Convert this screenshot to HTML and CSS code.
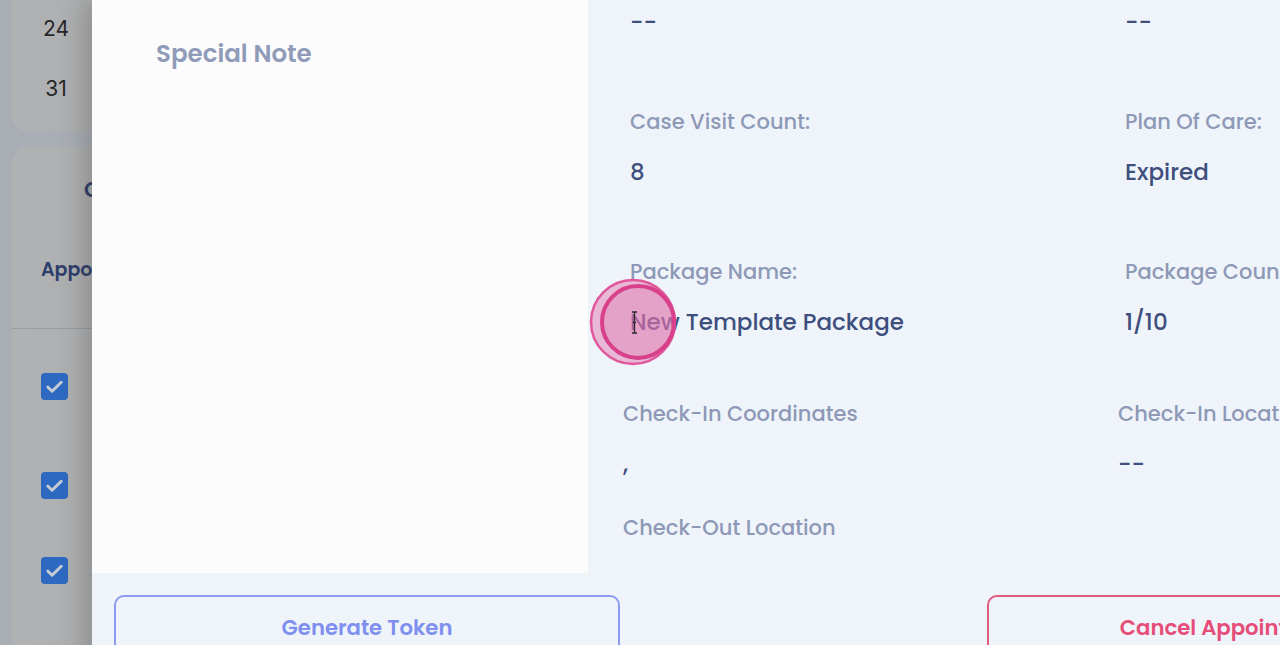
FILE: index.html
```html
<!DOCTYPE html>
<html>
<head>
<meta charset="utf-8">
<link rel="stylesheet" href="styles.css">
</head>
<body>
<div class="page">
  <div class="card card-top">
    <div class="daynum">24</div>
    <div class="daynum">31</div>
  </div>
  <div class="card card-list">
    <div class="list-title">Calendar</div>
    <div class="list-head">Appointments</div>
    <div class="list-rule"></div>
    <div class="checks">
      <span class="cb cb1"><svg viewBox="0 0 28 28" width="27" height="27"><path d="M7 14.5l4.5 4.5L21 9.5" fill="none" stroke="#c7ccd4" stroke-width="3" stroke-linecap="round" stroke-linejoin="round"/></svg></span>
      <span class="cb cb2"><svg viewBox="0 0 28 28" width="27" height="27"><path d="M7 14.5l4.5 4.5L21 9.5" fill="none" stroke="#c7ccd4" stroke-width="3" stroke-linecap="round" stroke-linejoin="round"/></svg></span>
      <span class="cb cb3"><svg viewBox="0 0 28 28" width="27" height="27"><path d="M7 14.5l4.5 4.5L21 9.5" fill="none" stroke="#c7ccd4" stroke-width="3" stroke-linecap="round" stroke-linejoin="round"/></svg></span>
    </div>
  </div>
</div>

<div class="modal">
  <div class="modal-body">
    <div class="note-panel">
      <div class="note-title">Special Note</div>
    </div>
    <div class="details">
      <div class="grid">
        <div class="field"><div class="label">Case Status:</div><div class="value">--</div></div>
        <div class="field"><div class="label">Authorization:</div><div class="value">--</div></div>
        <div class="field"><div class="label">Case Visit Count:</div><div class="value">8</div></div>
        <div class="field"><div class="label">Plan Of Care:</div><div class="value">Expired</div></div>
        <div class="field"><div class="label">Package Name:</div><div class="value">New Template Package</div></div>
        <div class="field"><div class="label">Package Count:</div><div class="value">1/10</div></div>
      </div>
      <div class="grid grid-lower">
        <div class="field"><div class="label">Check-In Coordinates</div><div class="value">,</div></div>
        <div class="field"><div class="label">Check-In Location</div><div class="value">--</div></div>
        <div class="field"><div class="label">Check-Out Location</div><div class="value"></div></div>
      </div>
    </div>
  </div>
  <div class="modal-footer">
    <button class="btn btn-token">Generate Token</button>
    <button class="btn btn-cancel">Cancel Appointment</button>
  </div>
</div>

<div class="click-mark">
  <svg width="100" height="100" viewBox="0 0 100 100">
    <circle cx="44" cy="45" r="42" fill="rgba(226,110,170,0.45)" stroke="#e0579c" stroke-width="2.5"/>
    <circle cx="49" cy="45" r="36" fill="rgba(220,120,175,0.35)" stroke="#d9408c" stroke-width="4"/>
    <path d="M43 35h3M48 35h-3M45.5 35v21M43 56h5M44 45.5h3" fill="none" stroke="#2a2a2a" stroke-width="1.3"/>
  </svg>
</div>
</body>
</html>
```

FILE: styles.css
```css
* { box-sizing: border-box; }
html, body {
  margin: 0;
  padding: 0;
  width: 1280px;
  height: 645px;
  overflow: hidden;
}
body {
  background: #a9aeb4;
  font-family: "Poppins", "Open Sans", "Liberation Sans", sans-serif;
}

/* background page, dimmed by backdrop */
.page {
  padding-left: 12px;
  display: flex;
  flex-direction: column;
  gap: 16px;
}
.card {
  width: 140px;
  background: linear-gradient(90deg, #b1b2b4 0%, #adaeaf 60%, #a4a4a5 100%);
}
.card-top {
  height: 131px;
  border-radius: 0 0 16px 16px;
  padding-top: 13px;
}
.daynum {
  width: 84px;
  text-align: center;
  font-family: "Inter", "Roboto", sans-serif;
  font-size: 21px;
  color: #262626;
  line-height: 32px;
  margin-bottom: 28px;
  padding-left: 4px;
}
.card-list {
  height: 520px;
  border-radius: 16px 16px 0 0;
}
.list-title {
  padding: 30px 0 0 72px;
  font-size: 21px;
  font-weight: 600;
  color: #2b3c66;
  line-height: 26px;
  white-space: nowrap;
}
.list-head {
  padding: 55px 0 0 29px;
  font-size: 19px;
  font-weight: 600;
  color: #2d3e6a;
  line-height: 24px;
  white-space: nowrap;
}
.list-rule {
  margin-top: 46px;
  height: 1px;
  background: #989ca1;
}
.checks {
  display: flex;
  flex-direction: column;
  padding-left: 29px;
}
.cb {
  width: 27px;
  height: 27px;
  border-radius: 4px;
  background: #2e69c1;
  display: block;
}
.cb svg { display: block; }
.cb1 { margin-top: 44px; }
.cb2 { margin-top: 72px; }
.cb3 { margin-top: 58px; }

/* modal */
.modal {
  position: absolute;
  top: 0;
  left: 92px;
  width: 1420px;
  height: 700px;
  background: #eff4fa;
  box-shadow: -8px 0 22px rgba(60, 60, 60, 0.28);
  display: flex;
  flex-direction: column;
}
.modal-body {
  display: flex;
  height: 573px;
  flex-shrink: 0;
}
.note-panel {
  flex: 0 0 496px;
  height: 573px;
  background: #fcfcfd;
  padding: 37px 0 0 64px;
}
.note-title {
  font-size: 24.5px;
  font-weight: 600;
  color: #8f9bb8;
  line-height: 34px;
}
.details {
  padding-left: 42px;
  margin-top: -40px;
}
.grid {
  display: grid;
  grid-template-columns: 495px 495px;
  row-gap: 76px;
}
.grid-lower {
  margin-top: 68px;
  margin-left: -7px;
  row-gap: 40px;
}
.field {
  display: flex;
  flex-direction: column;
  gap: 26px;
}
.label {
  font-size: 21px;
  font-weight: 500;
  color: #8d99b6;
  line-height: 24px;
  white-space: nowrap;
}
.value {
  font-size: 23px;
  font-weight: 500;
  color: #3e4f7e;
  line-height: 24px;
  height: 24px;
  white-space: nowrap;
}
.modal-footer {
  display: flex;
  gap: 367px;
  padding: 22px 0 0 22px;
}
.btn {
  flex: 0 0 506px;
  height: 70px;
  border-radius: 10px;
  background: transparent;
  font-family: inherit;
  font-size: 21.2px;
  font-weight: 600;
  display: flex;
  align-items: flex-start;
  justify-content: center;
  line-height: 24px;
  padding: 19px 0 0;
}
.btn-token {
  border: 2px solid #8b9bf1;
  color: #7e8ff0;
}
.btn-cancel {
  flex-basis: 490px;
  border: 2px solid #e25a80;
  color: #e64d78;
}

.click-mark {
  position: absolute;
  left: 589px;
  top: 277px;
  width: 100px;
  height: 100px;
  pointer-events: none;
}
.click-mark svg { display: block; }
```
